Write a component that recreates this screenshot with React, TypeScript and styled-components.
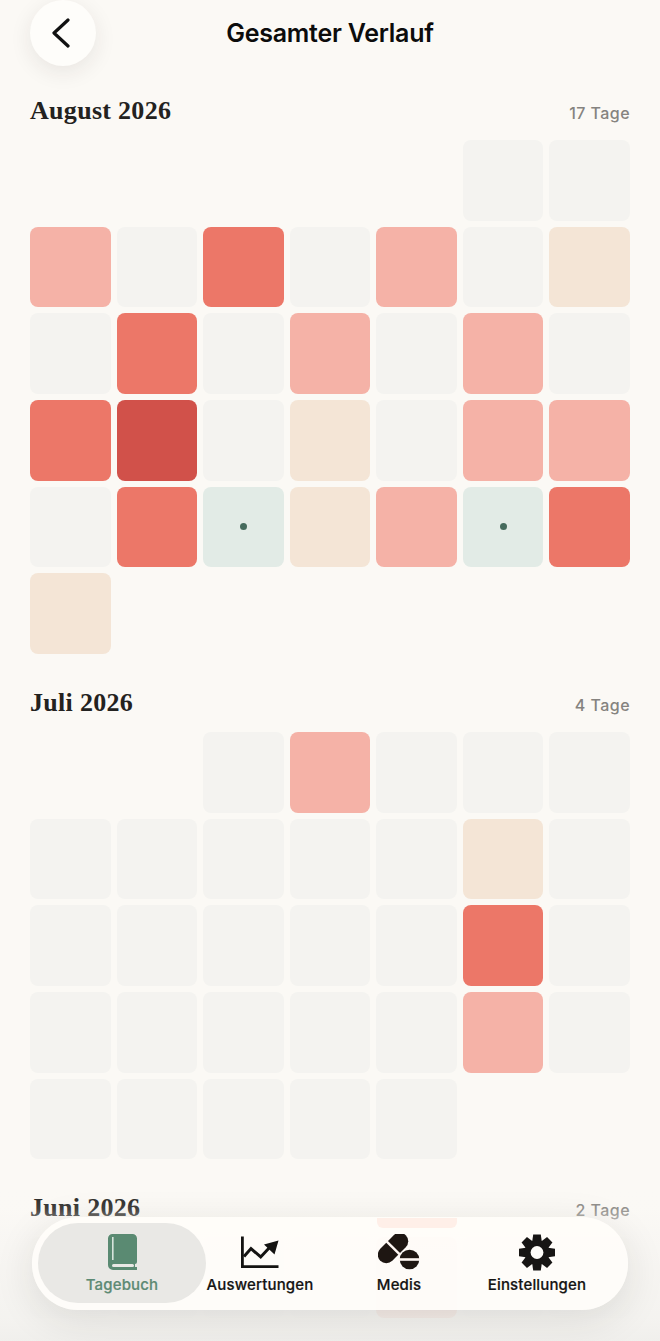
import React from "react";
import styled, { createGlobalStyle } from "styled-components";

const Global = createGlobalStyle`
  html, body { margin: 0; padding: 0; background: #fbf9f5; }
  * { box-sizing: border-box; }
`;

const Screen = styled.div`
  position: relative;
  width: 660px;
  height: 1341px;
  overflow: hidden;
  background: #fbf9f5;
  font-family: Inter, "Liberation Sans", sans-serif;
`;

const Header = styled.header`
  display: grid;
  grid-template-columns: 66px 1fr 66px;
  align-items: center;
  height: 66px;
  padding: 0 30px;
`;

const BackButton = styled.button`
  width: 66px;
  height: 66px;
  padding: 0 4px 0 0;
  border: 0;
  border-radius: 50%;
  background: #fefdfa;
  box-shadow: 0 6px 22px rgba(40, 35, 30, 0.09);
  display: flex;
  align-items: center;
  justify-content: center;
`;

const Title = styled.h1`
  margin: 0;
  text-align: center;
  font-size: 25px;
  font-weight: 600;
  letter-spacing: -0.25px;
  color: #0c0c0c;
`;

const Main = styled.main`
  display: flex;
  flex-direction: column;
  gap: 34px;
  padding: 30px 30px 0;
`;

const Section = styled.section`
  display: flex;
  flex-direction: column;
  gap: 14px;
`;

const SectionHead = styled.div`
  display: flex;
  align-items: center;
  justify-content: space-between;
  height: 30px;
`;

const Month = styled.h2`
  margin: 0;
  font-family: "Liberation Serif", serif;
  font-size: 26px;
  font-weight: 700;
  letter-spacing: 0.3px;
  color: #232220;
`;

const Count = styled.span`
  font-size: 16px;
  font-weight: 500;
  letter-spacing: 0.45px;
  color: #85837f;
  padding-top: 4px;
`;

const Grid = styled.div`
  display: grid;
  grid-template-columns: repeat(7, 1fr);
  column-gap: 6px;
  row-gap: 6.1px;
`;

type Tone = "blank" | "empty" | "pink" | "red" | "dark" | "peach" | "green";

const toneColors: Record<Tone, string> = {
  blank: "transparent",
  empty: "#f4f3f0",
  pink: "#f5b2a7",
  red: "#ec7768",
  dark: "#d1514a",
  peach: "#f4e5d6",
  green: "#e2ebe6",
};

const Cell = styled.div<{ $tone: Tone }>`
  aspect-ratio: 1;
  border-radius: 8px;
  display: flex;
  align-items: center;
  justify-content: center;
  background: ${(p) => toneColors[p.$tone]};
`;

const Dot = styled.span`
  width: 7px;
  height: 7px;
  border-radius: 50%;
  background: #466b5d;
`;

const Fade = styled.div`
  position: absolute;
  left: 0;
  right: 0;
  bottom: 0;
  height: 150px;
  pointer-events: none;
  background: linear-gradient(
    to bottom,
    rgba(251, 249, 245, 0) 0%,
    rgba(250, 248, 245, 0.15) 12%,
    rgba(248, 246, 243, 0.78) 30%,
    rgba(243, 242, 239, 0.88) 85%,
    rgba(240, 239, 236, 0.97) 100%
  );
`;

const Nav = styled.nav`
  position: absolute;
  left: 32px;
  top: 1217px;
  width: 596px;
  height: 93px;
  padding: 6px;
  border-radius: 46px;
  background: rgba(255, 253, 250, 0.9);
  box-shadow: 0 10px 40px rgba(40, 35, 30, 0.11);
  display: grid;
  grid-template-columns: 168px 108px 170px 106px;
`;

const Reflection = styled.div`
  position: absolute;
  left: 345px;
  top: 1px;
  width: 80px;
  height: 10px;
  background: #ffefe8;
  border-radius: 0 0 6px 6px;
`;

const NavItem = styled.div<{ $active?: boolean }>`
  position: relative;
  height: 80px;
  border-radius: 40px;
  display: flex;
  flex-direction: column;
  align-items: center;
  justify-content: flex-end;
  padding-bottom: 9px;
  background: ${(p) => (p.$active ? "#e9e8e5" : "transparent")};
  color: ${(p) => (p.$active ? "#5d8a74" : "#151413")};
`;

const IconSlot = styled.div`
  height: 40px;
  display: flex;
  align-items: center;
  justify-content: center;
  margin-bottom: 4px;
`;

const NavLabel = styled.span`
  font-size: 15px;
  font-weight: 500;
  letter-spacing: 0.15px;
  white-space: nowrap;
  line-height: 18px;
  -webkit-text-stroke: 0.2px currentColor;
`;

const Back = () => (
  <svg width="20" height="30" viewBox="0 0 20 30" fill="none">
    <path d="M17 2 L3 15 L17 28" stroke="#111" strokeWidth="3.2" strokeLinecap="round" strokeLinejoin="round" />
  </svg>
);

const BookIcon = () => (
  <svg width="29" height="36" viewBox="0 0 29 36">
    <path
      d="M4.5 0 H24.5 A4.5 4.5 0 0 1 29 4.5 V28 Q29 30 27 30 V33 H29 V36 H5 A5 5 0 0 1 0 31 V4.5 A4.5 4.5 0 0 1 4.5 0 Z"
      fill="#5a8a72"
    />
    <rect x="4" y="3" width="1.6" height="23" fill="#d7e4dc" />
    <rect x="4" y="30" width="22" height="3" rx="1.5" fill="#e9e8e5" />
  </svg>
);

const ChartIcon = () => (
  <svg width="38" height="33" viewBox="0 0 38 33" fill="none">
    <path d="M1.4 0.5 V30.6 H37.5" stroke="#141312" strokeWidth="2.8" />
    <path d="M3 20.5 L10 12.5 L19.7 21 L29 11" stroke="#141312" strokeWidth="3" />
    <path d="M37.5 4.5 L23 8.5 L33.5 18.5 Z" fill="#141312" />
  </svg>
);

const PillsIcon = () => (
  <svg width="42" height="36" viewBox="0 0 42 36">
    <g transform="rotate(-45 15 14)">
      <rect x="-3" y="5.5" width="36" height="17" rx="8.5" fill="#1e1612" />
      <rect x="14" y="4" width="2.4" height="20" fill="#fff7f3" />
    </g>
    <circle cx="31.5" cy="25.5" r="9.8" fill="#1e1612" />
    <rect x="20" y="24.2" width="23" height="2.6" fill="#fff7f3" />
  </svg>
);

const GearIcon = () => (
  <svg width="36" height="37" viewBox="0 0 36 37">
    {[0, 45, 90, 135, 180, 225, 270, 315].map((a) => (
      <path key={a} d="M14.2 0.5 H21.8 L23 9 H13 Z" fill="#171514" transform={`rotate(${a} 18 18.5)`} />
    ))}
    <circle cx="18" cy="18.5" r="12.5" fill="#171514" />
    <circle cx="18" cy="18.5" r="6.4" fill="#fffdfa" />
  </svg>
);

const B: Tone = "blank";
const E: Tone = "empty";
const P: Tone = "pink";
const R: Tone = "red";
const D: Tone = "dark";
const C: Tone = "peach";
const G: Tone = "green";

const months: { name: string; count: string; cells: Tone[] }[] = [
  {
    name: "August 2026",
    count: "17 Tage",
    cells: [
      B, B, B, B, B, E, E,
      P, E, R, E, P, E, C,
      E, R, E, P, E, P, E,
      R, D, E, C, E, P, P,
      E, R, G, C, P, G, R,
      C,
    ],
  },
  {
    name: "Juli 2026",
    count: "4 Tage",
    cells: [
      B, B, E, P, E, E, E,
      E, E, E, E, E, C, E,
      E, E, E, E, E, R, E,
      E, E, E, E, E, P, E,
      E, E, E, E, E,
    ],
  },
  {
    name: "Juni 2026",
    count: "2 Tage",
    cells: [E, E, E, E, P, E, E],
  },
];

const items = [
  { label: "Tagebuch", icon: <BookIcon />, active: true },
  { label: "Auswertungen", icon: <ChartIcon /> },
  { label: "Medis", icon: <PillsIcon /> },
  { label: "Einstellungen", icon: <GearIcon /> },
];

export default function App() {
  return (
    <Screen>
      <Global />
      <Header>
        <BackButton aria-label="Zurück">
          <Back />
        </BackButton>
        <Title>Gesamter Verlauf</Title>
      </Header>
      <Main>
        {months.map((m) => (
          <Section key={m.name}>
            <SectionHead>
              <Month>{m.name}</Month>
              <Count>{m.count}</Count>
            </SectionHead>
            <Grid>
              {m.cells.map((t, i) => (
                <Cell key={i} $tone={t}>
                  {t === "green" && <Dot />}
                </Cell>
              ))}
            </Grid>
          </Section>
        ))}
      </Main>
      <Fade />
      <Nav>
        <Reflection />
        {items.map((it) => (
          <NavItem key={it.label} $active={it.active}>
            <IconSlot>{it.icon}</IconSlot>
            <NavLabel>{it.label}</NavLabel>
          </NavItem>
        ))}
      </Nav>
    </Screen>
  );
}
